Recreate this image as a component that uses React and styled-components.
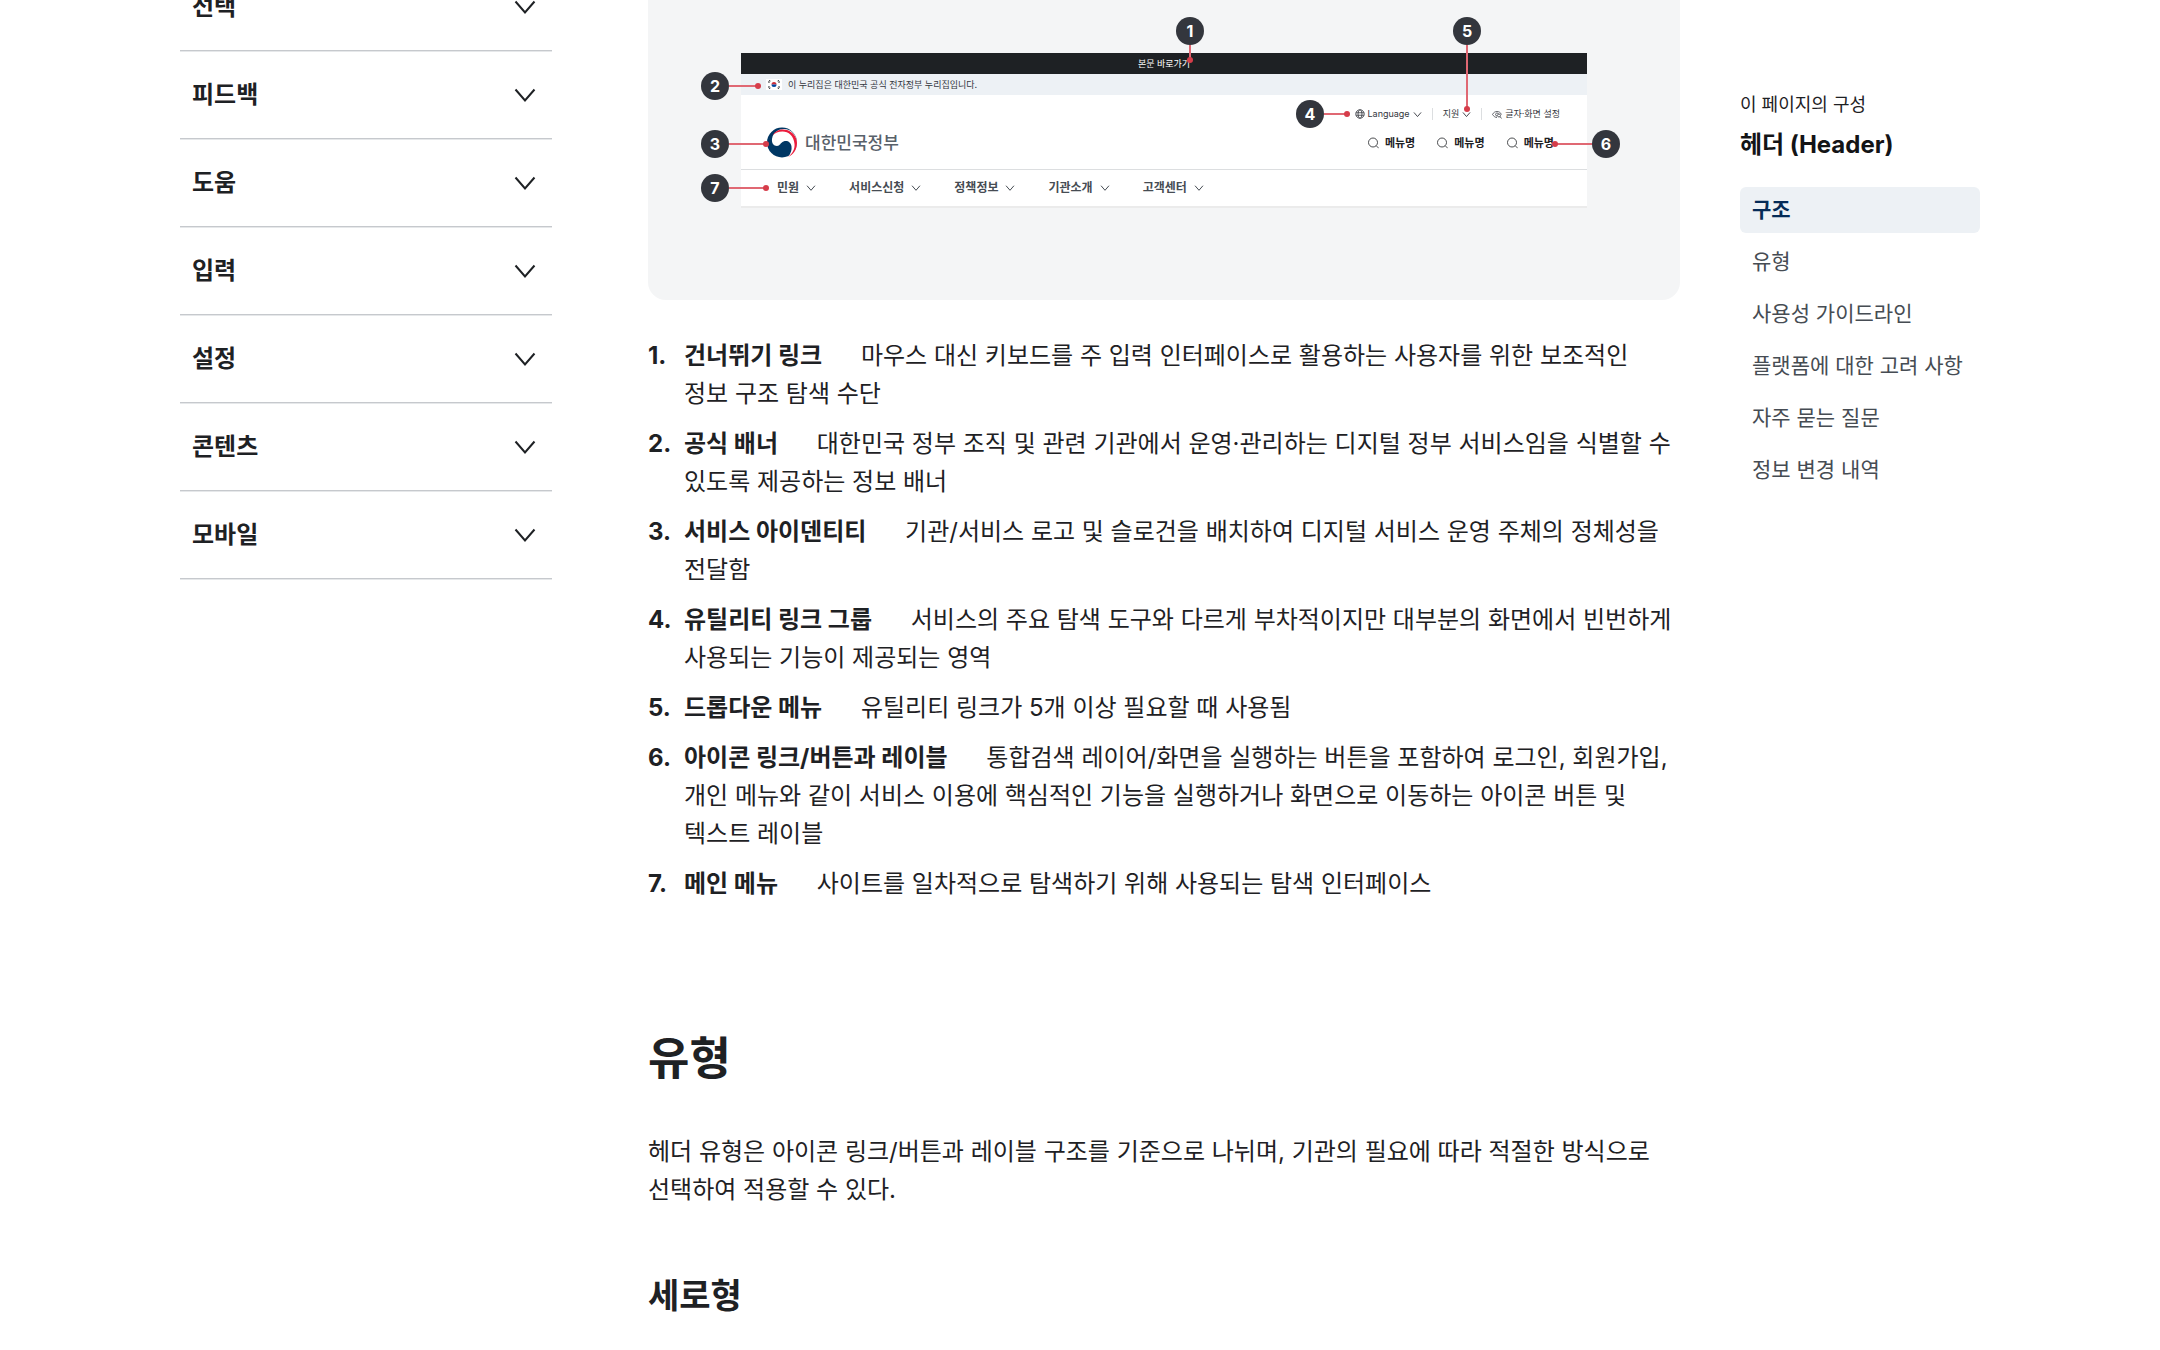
import React from "react";
import styled, { createGlobalStyle } from "styled-components";

const menus = ["선택", "피드백", "도움", "입력", "설정", "콘텐츠", "모바일"];

const parts = [
  {
    term: "건너뛰기 링크",
    text: "마우스 대신 키보드를 주 입력 인터페이스로 활용하는 사용자를 위한 보조적인 정보 구조 탐색 수단",
  },
  {
    term: "공식 배너",
    text: "대한민국 정부 조직 및 관련 기관에서 운영·관리하는 디지털 정부 서비스임을 식별할 수 있도록 제공하는 정보 배너",
  },
  {
    term: "서비스 아이덴티티",
    text: "기관/서비스 로고 및 슬로건을 배치하여 디지털 서비스 운영 주체의 정체성을 전달함",
  },
  {
    term: "유틸리티 링크 그룹",
    text: "서비스의 주요 탐색 도구와 다르게 부차적이지만 대부분의 화면에서 빈번하게 사용되는 기능이 제공되는 영역",
  },
  {
    term: "드롭다운 메뉴",
    text: "유틸리티 링크가 5개 이상 필요할 때 사용됨",
  },
  {
    term: "아이콘 링크/버튼과 레이블",
    text: "통합검색 레이어/화면을 실행하는 버튼을 포함하여 로그인, 회원가입, 개인 메뉴와 같이 서비스 이용에 핵심적인 기능을 실행하거나 화면으로 이동하는 아이콘 버튼 및 텍스트 레이블",
  },
  {
    term: "메인 메뉴",
    text: "사이트를 일차적으로 탐색하기 위해 사용되는 탐색 인터페이스",
  },
];

const tocLinks = [
  "구조",
  "유형",
  "사용성 가이드라인",
  "플랫폼에 대한 고려 사항",
  "자주 묻는 질문",
  "정보 변경 내역",
];

const mainMenus = ["민원", "서비스신청", "정책정보", "기관소개", "고객센터"];

function Chevron({ size, stroke }) {
  return (
    <svg width={size} height={size} viewBox="0 0 24 24" fill="none" aria-hidden="true">
      <path d="M2.5 6.5 12 17.5 21.5 6.5" stroke="currentColor" strokeWidth={stroke} />
    </svg>
  );
}

function Search() {
  return (
    <svg width="11" height="12" viewBox="0 0 22 24" fill="none" aria-hidden="true">
      <circle cx="10" cy="11" r="9" stroke="currentColor" strokeWidth="1.6" />
      <path d="m16.5 17.5 5 5" stroke="currentColor" strokeWidth="1.6" />
    </svg>
  );
}

function Globe() {
  return (
    <svg width="10" height="10" viewBox="0 0 20 20" fill="none" stroke="currentColor" strokeWidth="1.6" aria-hidden="true">
      <circle cx="10" cy="10" r="8.5" />
      <ellipse cx="10" cy="10" rx="4" ry="8.5" />
      <path d="M2 7.5h16M2 12.5h16" />
    </svg>
  );
}

function TextZoom() {
  return (
    <svg width="10" height="9" viewBox="0 0 20 18" fill="none" stroke="currentColor" strokeWidth="1.5" aria-hidden="true">
      <path d="M10 15C6 15 3 12 1 9c2-4 5-6 9-6s7 2 9 6" />
      <path d="M10 12a3 3 0 1 1 3-4" />
      <circle cx="14" cy="11" r="3" />
      <path d="m16 13 3 4" />
    </svg>
  );
}

function Flag() {
  return (
    <svg width="16" height="11" viewBox="0 0 32 22" aria-hidden="true">
      <rect width="32" height="22" fill="#fff" />
      <path d="M11 11a5 5 0 0 1 10 0z" fill="#cd2e3a" />
      <path d="M11 11a5 5 0 0 0 10 0z" fill="#0047a0" />
      <path
        d="m5 7 3-4M24 3l3 4M5 15l3 4M24 19l3-4"
        stroke="#1e2124"
        strokeWidth="3"
        strokeDasharray="2 1"
      />
    </svg>
  );
}

function Emblem() {
  return (
    <svg width="30" height="32" viewBox="0 0 60 64" aria-hidden="true">
      <circle cx="30" cy="31" r="30" fill="#003764" />
      <path
        d="M10 24C12 10 24 4 34 4c14 0 26 12 26 27 0 14-7 24-18 29 6-7 8-15 7-21-1-9-9-13-16-10-6 2-7 9-13 9-7 0-11-6-10-14z"
        fill="#fff"
      />
      <path
        d="M11 17C18 5 30 3 40 6c11 4 20 13 20 26 0 13-7 23-18 28 9-7 14-16 13-26C54 18 43 9 31 9 23 9 16 12 11 17z"
        fill="#eb1c3c"
      />
    </svg>
  );
}

function App() {
  return (
    <>
      <GlobalStyle />
      <Page>
        <nav aria-label="컴포넌트">
          {menus.map((menu) => (
            <MenuButton key={menu} type="button">
              {menu}
              <Chevron size={24} stroke={2} />
            </MenuButton>
          ))}
        </nav>

        <main>
          <Panel>
            <Mock>
              <SkipBar>본문 바로가기</SkipBar>
              <Banner>
                <Flag />이 누리집은 대한민국 공식 전자정부 누리집입니다.
              </Banner>
              <MockHead>
                <Logo>
                  <Emblem />
                  대한민국정부
                </Logo>
                <Tools>
                  <UtilRow>
                    <Util>
                      <Globe />
                      Language
                      <Chevron size={9} stroke={2.4} />
                    </Util>
                    <Util>
                      지원
                      <Chevron size={9} stroke={2.4} />
                    </Util>
                    <Util>
                      <TextZoom />
                      글자·화면 설정
                    </Util>
                  </UtilRow>
                  <IconRow>
                    {[1, 2, 3].map((n) => (
                      <IconLink key={n}>
                        <Search />
                        메뉴명
                      </IconLink>
                    ))}
                  </IconRow>
                </Tools>
              </MockHead>
              <MockNav>
                {mainMenus.map((menu) => (
                  <MockMenu key={menu}>
                    {menu}
                    <Chevron size={10} stroke={2.4} />
                  </MockMenu>
                ))}
              </MockNav>

              <DownCallout $x="435px" $len={29}>1</DownCallout>
              <RightCallout $x="-40px" $y="19px" $len={29}>2</RightCallout>
              <RightCallout $x="-40px" $y="77px" $len={37}>3</RightCallout>
              <RightCallout $x="calc(100% - 291px)" $y="47px" $len={23}>4</RightCallout>
              <DownCallout $x="calc(100% - 134px)" $len={78}>5</DownCallout>
              <LeftCallout $x="calc(100% + 5px)" $y="77px" $len={37}>6</LeftCallout>
              <RightCallout $x="-40px" $y="121px" $len={37}>7</RightCallout>
            </Mock>
          </Panel>

          <PartList>
            {parts.map((part) => (
              <Part key={part.term}>
                <Term>{part.term}</Term> {part.text}
              </Part>
            ))}
          </PartList>

          <SectionTitle>유형</SectionTitle>
          <Paragraph>
            헤더 유형은 아이콘 링크/버튼과 레이블 구조를 기준으로 나뉘며, 기관의
            필요에 따라 적절한 방식으로 선택하여 적용할 수 있다.
          </Paragraph>
          <SubTitle>세로형</SubTitle>
        </main>

        <Toc>
          <TocLabel>이 페이지의 구성</TocLabel>
          <TocTitle>헤더 (Header)</TocTitle>
          <TocList>
            {tocLinks.map((link, i) => (
              <li key={link}>
                <TocLink href={`#section-${i}`} $active={i === 0}>
                  {link}
                </TocLink>
              </li>
            ))}
          </TocList>
        </Toc>
      </Page>
    </>
  );
}

const GlobalStyle = createGlobalStyle`
  * {
    box-sizing: border-box;
  }

  body {
    margin: 0;
    background: #fff;
    color: #1e2124;
    font-family: Inter, "Noto Sans CJK KR", sans-serif;
    font-size: 24px;
    line-height: 38px;
    word-break: keep-all;
    overflow-x: hidden;
  }

  #root {
    overflow: hidden;
  }
`;

/* the page is scrolled a little into its first row */
const Page = styled.div`
  display: grid;
  grid-template-columns: 372px minmax(0, 1fr) 240px;
  align-items: start;
  max-width: 1800px;
  margin: -37px auto 0;

  > main {
    margin: 0 60px 0 96px;
  }
`;

const MenuButton = styled.button`
  display: flex;
  align-items: center;
  justify-content: space-between;
  width: 100%;
  height: 88px;
  padding: 0 15px 0 12px;
  border: 0;
  border-bottom: 1px solid #c6c9cd;
  box-shadow: 0 1px #e6e8ea;
  background: none;
  color: #1e2124;
  font: inherit;
  font-weight: 700;
  cursor: pointer;
`;

const Panel = styled.div`
  padding: 90px 93px 92px;
  border-radius: 0 0 18px 18px;
  background: #f4f5f6;
`;

const Mock = styled.div`
  position: relative;
  background: #fff;
  border-bottom: 2px solid #ebebeb;
  color: #33363d;
  font-size: 9px;
  line-height: 12px;
`;

const SkipBar = styled.div`
  display: flex;
  align-items: center;
  justify-content: center;
  height: 21px;
  background: #1e2124;
  color: #fff;
`;

const Banner = styled.div`
  display: flex;
  align-items: center;
  gap: 6px;
  height: 21px;
  padding: 0 25px;
  background: #edf1f5;
`;

const MockHead = styled.div`
  display: flex;
  justify-content: space-between;
  height: 75px;
  padding: 13px 27px 0 26px;
  border-bottom: 1px solid #dcdee0;
`;

const Logo = styled.div`
  display: flex;
  align-items: center;
  gap: 8px;
  height: 70px;
  color: #58616a;
  font-size: 17px;
  font-weight: 500;
`;

const Tools = styled.div`
  display: flex;
  flex-direction: column;
  align-items: flex-end;
  gap: 17px;
`;

const UtilRow = styled.div`
  display: flex;
`;

const Util = styled.span`
  display: flex;
  align-items: center;
  gap: 3px;

  & + & {
    margin-left: 10px;
    padding-left: 10px;
    border-left: 1px solid #dcdee0;
  }
`;

const IconRow = styled.div`
  display: flex;
  gap: 22px;
  padding-right: 6px;
`;

const IconLink = styled.span`
  display: flex;
  align-items: center;
  gap: 6px;
  color: #1e2124;
  font-size: 11px;
  font-weight: 700;
`;

const MockNav = styled.div`
  display: flex;
  align-items: center;
  gap: 33px;
  height: 36px;
  padding: 0 36px;
`;

const MockMenu = styled.span`
  display: flex;
  align-items: center;
  gap: 7px;
  color: #464c53;
  font-size: 12px;
  font-weight: 700;
`;

/* numbered marker, with a red leader line that ends in a dot */
const Callout = styled.span`
  position: absolute;
  left: ${({ $x }) => $x};
  display: flex;
  align-items: center;
  justify-content: center;
  width: 28px;
  height: 28px;
  border-radius: 50%;
  background: #33363d;
  color: #fff;
  font-size: 16px;
  font-weight: 700;

  &::before,
  &::after {
    content: "";
    position: absolute;
  }

  &::before {
    background: #e06873;
  }

  &::after {
    width: 6px;
    height: 6px;
    border-radius: 50%;
    background: #d63d4a;
  }
`;

const DownCallout = styled(Callout)`
  top: -36px;

  &::before {
    top: 28px;
    width: 2px;
    height: ${({ $len }) => $len - 13}px;
  }

  &::after {
    top: ${({ $len }) => $len + 11}px;
  }
`;

const RightCallout = styled(Callout)`
  top: ${({ $y }) => $y};

  &::before {
    left: 28px;
    width: ${({ $len }) => $len}px;
    height: 2px;
  }

  &::after {
    left: ${({ $len }) => $len + 25}px;
  }
`;

const LeftCallout = styled(Callout)`
  top: ${({ $y }) => $y};

  &::before {
    right: 28px;
    width: ${({ $len }) => $len}px;
    height: 2px;
  }

  &::after {
    right: ${({ $len }) => $len + 25}px;
  }
`;

const PartList = styled.ol`
  display: grid;
  gap: 12px;
  margin: 37px 0 0;
  padding: 0 6px 0 0;
  list-style: none;
  counter-reset: part;
`;

const Part = styled.li`
  position: relative;
  padding-left: 36px;
  counter-increment: part;

  &::before {
    content: counter(part) ".";
    position: absolute;
    left: 0;
    font-weight: 700;
  }
`;

const Term = styled.strong`
  margin-right: 32px;
  font-weight: 700;
`;

const SectionTitle = styled.h2`
  margin: 121px 0 0;
  font-size: 45px;
  line-height: 70px;
`;

const Paragraph = styled.p`
  margin: 39px 0 0;
`;

const SubTitle = styled.h3`
  margin: 62px 0 0;
  font-size: 34px;
  line-height: 50px;
`;

const Toc = styled.aside`
  padding-top: 128px;
`;

const TocLabel = styled.p`
  margin: 0;
  font-size: 18px;
  line-height: 28px;
`;

const TocTitle = styled.p`
  margin: 7px 0 23px;
  color: #131416;
  font-weight: 700;
`;

const TocList = styled.ul`
  display: grid;
  gap: 6px;
  margin: 0;
  padding: 0;
  list-style: none;
`;

const TocLink = styled.a`
  display: block;
  padding: 0 12px;
  border-radius: 6px;
  background: ${({ $active }) => ($active ? "#edf1f5" : "transparent")};
  color: ${({ $active }) => ($active ? "#052b57" : "#464c53")};
  font-size: 21px;
  font-weight: ${({ $active }) => ($active ? 700 : 400)};
  line-height: 46px;
  text-decoration: none;
`;

export default App;
